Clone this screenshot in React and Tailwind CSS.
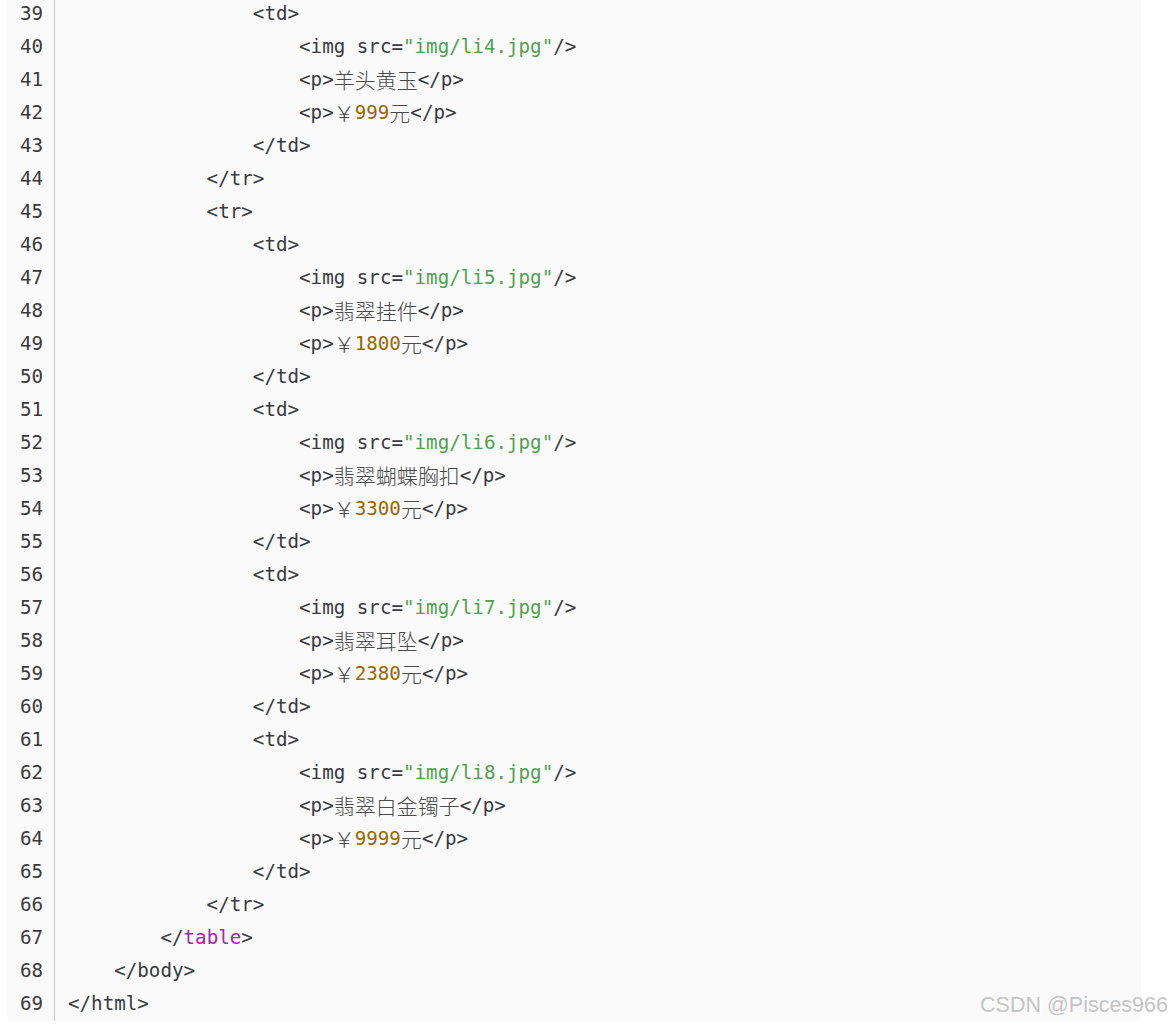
const MONO = "font-['DejaVu_Sans_Mono','Liberation_Mono',monospace]"

// token kinds: t = plain, s = string, n = number, k = keyword, c = cjk text
const TD = (ind) => [['t', ' '.repeat(ind) + '<td>']]
const END_TD = [['t', '                </td>']]

const img = (n) => [
  ['t', '                    <img src='],
  ['s', `"img/li${n}.jpg"`],
  ['t', '/>'],
]
const name = (txt) => [['t', '                    <p>'], ['c', txt], ['t', '</p>']]
const price = (num) => [
  ['t', '                    <p>'],
  ['c', '￥'],
  ['n', num],
  ['c', '元'],
  ['t', '</p>'],
]

const LINES = [
  TD(16),
  img(4),
  name('羊头黄玉'),
  price('999'),
  END_TD,
  [['t', '            </tr>']],
  [['t', '            <tr>']],
  TD(16),
  img(5),
  name('翡翠挂件'),
  price('1800'),
  END_TD,
  TD(16),
  img(6),
  name('翡翠蝴蝶胸扣'),
  price('3300'),
  END_TD,
  TD(16),
  img(7),
  name('翡翠耳坠'),
  price('2380'),
  END_TD,
  TD(16),
  img(8),
  name('翡翠白金镯子'),
  price('9999'),
  END_TD,
  [['t', '            </tr>']],
  [['t', '        </'], ['k', 'table'], ['t', '>']],
  [['t', '    </body>']],
  [['t', '</html>']],
]

const TOKEN_CLASS = {
  t: 'text-[#383a42]',
  s: 'text-[#50a14f]',
  n: 'text-[#986801]',
  k: 'text-[#a626a4]',
  c: "text-[#4a4a4a] text-[21px] font-['Noto_Sans_CJK_SC',serif] font-light",
}

function CodeLine({ tokens }) {
  return (
    <div className="h-[33px] flex items-center whitespace-pre">
      {tokens.map(([kind, text], i) => (
        <span key={i} className={TOKEN_CLASS[kind]}>
          {text}
        </span>
      ))}
    </div>
  )
}

export default function App() {
  return (
    <div className="relative w-[1173px] h-[1025px] bg-white overflow-hidden">
      <div className={`ml-[7px] w-[1134px] h-[1021px] bg-[#fafafa] overflow-hidden ${MONO} text-[19.2px]`}>
        <div className="flex -mt-[2.5px]">
          {/* line numbers */}
          <div className="w-[48px] pr-[11px] text-right border-r border-[#c8c8c8] text-[#3a3a3a]">
            {LINES.map((_, i) => (
              <div key={i} className="h-[33px] flex items-center justify-end">
                {39 + i}
              </div>
            ))}
          </div>

          {/* code */}
          <div className="pl-[13px]">
            {LINES.map((tokens, i) => (
              <CodeLine key={i} tokens={tokens} />
            ))}
          </div>
        </div>
      </div>

      {/* watermark */}
      <div className="absolute right-[5px] top-[989px] font-['Liberation_Sans',Arial,sans-serif] text-[21.5px] text-[#c4c4c4] [text-shadow:1px_1px_1px_#ffffff]">
        CSDN @Pisces966
      </div>
    </div>
  )
}
